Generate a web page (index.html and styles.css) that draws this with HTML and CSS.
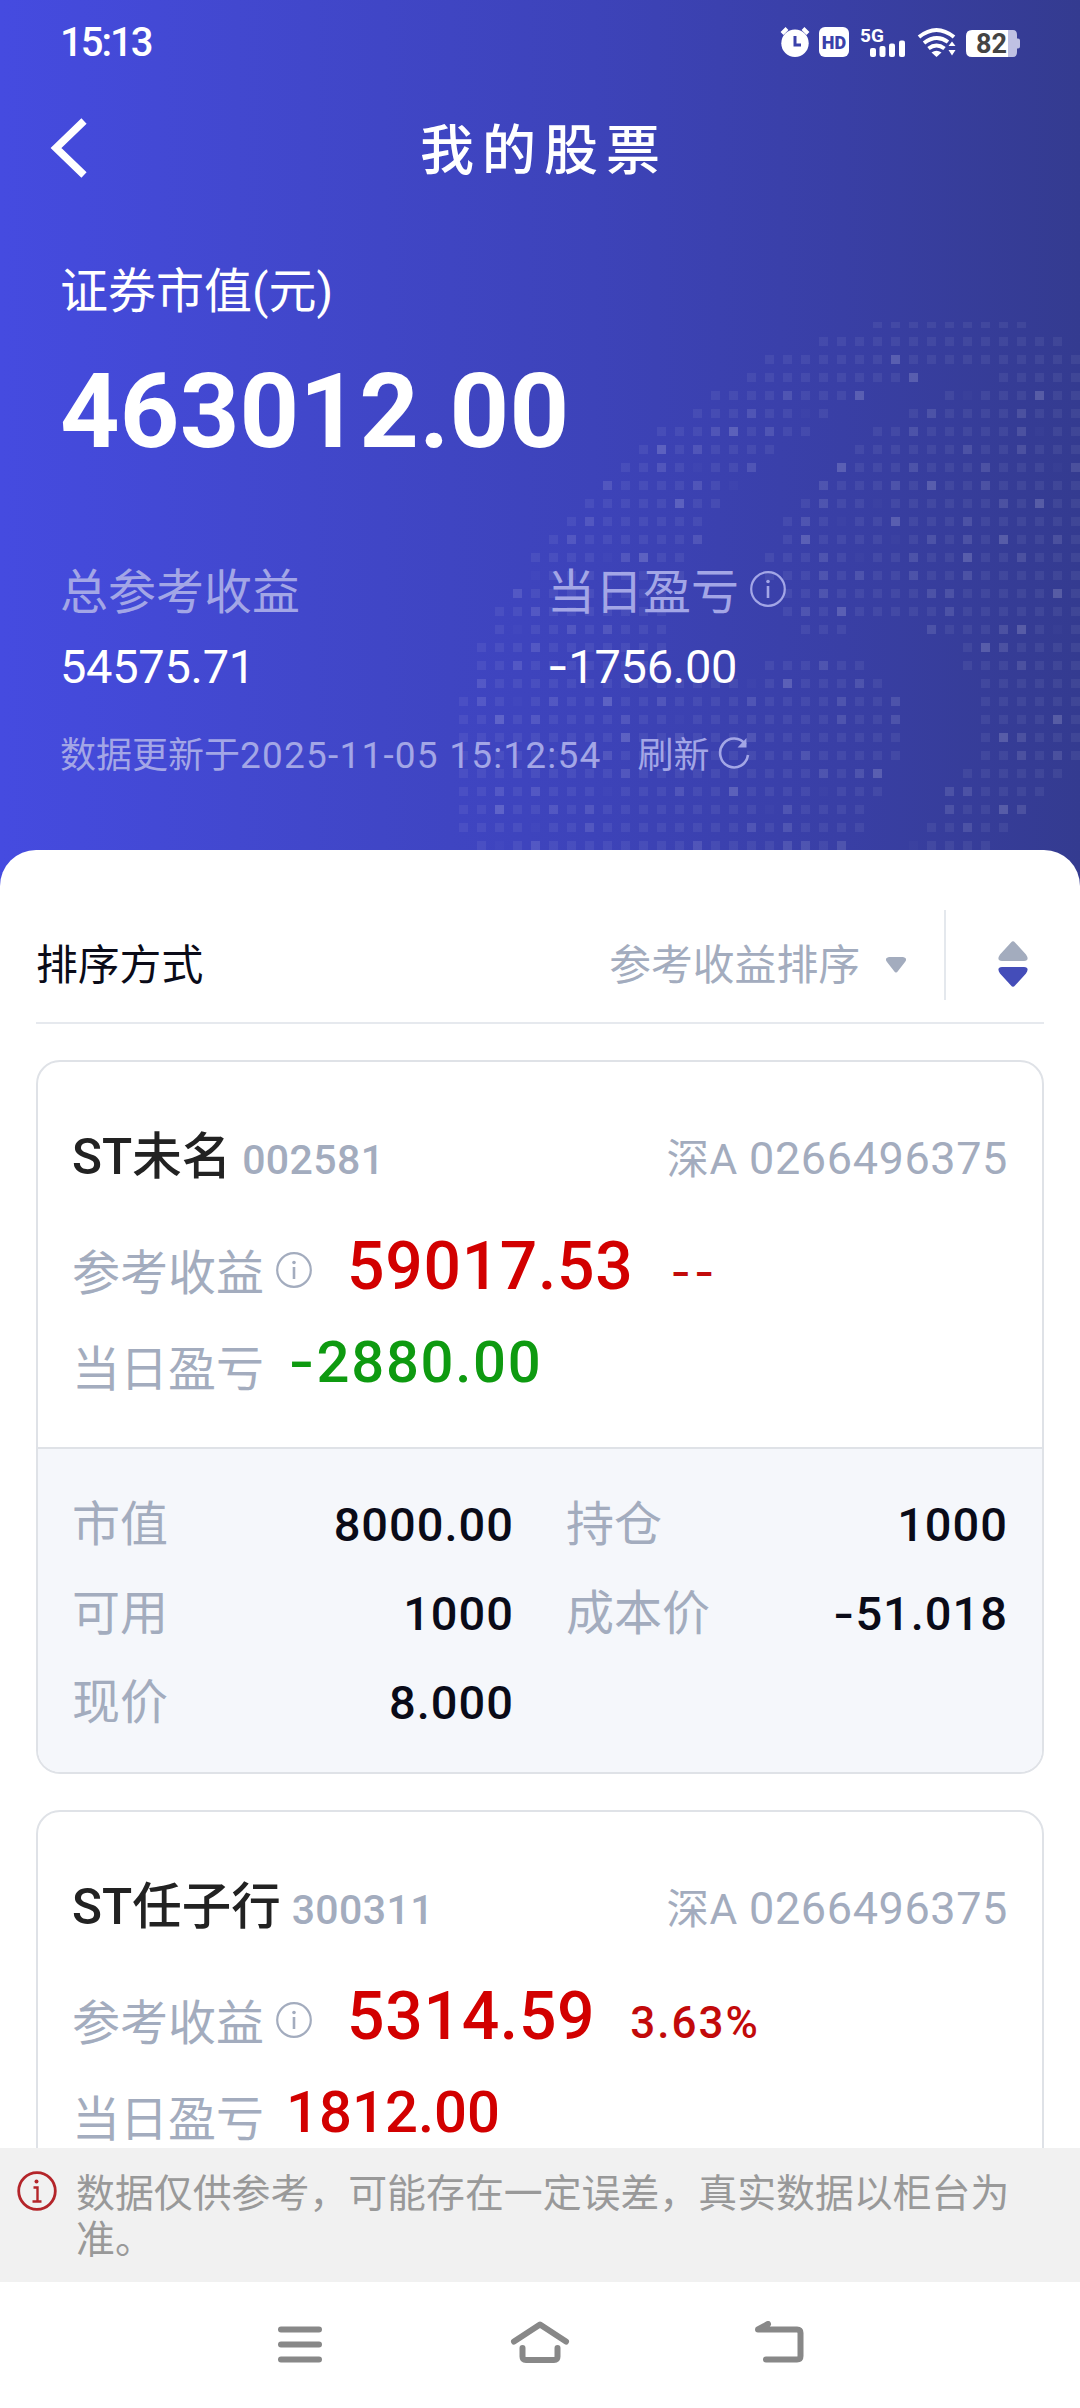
FILE: index.html
```html
<!DOCTYPE html>
<html lang="zh-CN">
<head>
<meta charset="utf-8">
<title>我的股票</title>
<link rel="stylesheet" href="styles.css">
</head>
<body>
<div class="screen">
  <main class="content">
    <section class="hero">
      <svg class="hero-dots" id="dots" width="640" height="564" viewBox="440 322 640 564"></svg>
      <div class="status">
        <span class="clock">15:13</span>
        <svg class="status-icons" width="244" height="36" viewBox="778 24 244 36">
          <g fill="#fff">
            <circle cx="795" cy="43.3" r="13.7"/>
            <path d="M782 33.5l5-5M808 33.5l-5-5" stroke="#fff" stroke-width="4" fill="none"/>
            <path d="M795 36v9h6" stroke="#3a41aa" stroke-width="3" fill="none"/>
            <rect x="819" y="27" width="30" height="30" rx="6"/>
            <text class="hd" x="834" y="49" text-anchor="middle">HD</text>
            <text class="net" x="860" y="42">5G</text>
            <rect x="870" y="48" width="6" height="9" rx="2"/>
            <rect x="879.5" y="46" width="6" height="11" rx="2"/>
            <rect x="889" y="43.500" width="6" height="13.500" rx="2"/>
            <rect x="899" y="40.500" width="6" height="16.500" rx="2"/>
            <path d="M936.500 57l-5-4.500q5-3.500 10 0z"/>
            <path d="M948.500 46l3.500-4.500 3.500 4.500zM948.500 50l3.500 5.500 3.500-5.500z"/>
          </g>
          <path d="M919 37q17.500-14 35 0M924 43q12.500-9.500 24 -1M928.500 48.500q8-6 16 0" fill="none" stroke="#fff" stroke-width="4"/>
          <path d="M1008 30h5q4 0 4 5v3.500h1q2 0 2 2v6q0 2-2 2h-1V52q0 5-4 5h-5z" fill="#bfc1e3"/>
          <path d="M972 30h36v27h-36q-6 0-6-6V36q0-6 6-6z" fill="#fff"/>
          <text class="battery" x="991.500" y="52.500" text-anchor="middle">82</text>
        </svg>
      </div>
      <header class="titlebar">
        <svg class="back" width="40" height="66" viewBox="0 0 40 66"><path d="M35 6L7 33l28 27" fill="none" stroke="#fff" stroke-width="7.500"/></svg>
        <h1>我的股票</h1>
      </header>
      <div class="total-label">证券市值(元)</div>
      <div class="total">463012.00</div>
      <div class="stats">
        <div>
          <div class="stat-label">总参考收益</div>
          <div class="stat-value">54575.71</div>
        </div>
        <div>
          <div class="stat-label">当日盈亏<svg class="info" viewBox="0 0 36 36"><use href="#i-info"/></svg></div>
          <div class="stat-value"><span class="minus">-</span>1756.00</div>
        </div>
      </div>
      <div class="updated"><span>数据更新于</span><span class="stamp">2025-11-05 15:12:54</span><span class="refresh">刷新</span>
        <svg width="34" height="34" viewBox="0 0 34 34"><path d="M28.500 7.500A14 14.500 0 1 0 31 18" fill="none" stroke="#a3a6e6" stroke-width="2.600"/><path d="M29.500 1v9.500h-9z" fill="#a3a6e6"/></svg>
      </div>
    </section>

    <section class="sheet">
      <div class="sort">
        <span class="sort-title">排序方式</span>
        <span class="sort-by">参考收益排序</span>
        <svg class="caret" width="20" height="16" viewBox="0 0 20 16"><path d="M3 0h14q5 1 2 5l-7 9q-2 3-4 0L1 5Q-2 1 3 0z" fill="#a3acbe"/></svg>
        <i class="rule"></i>
        <svg class="order" width="30" height="46" viewBox="0 0 30 46"><path d="M13 1.500q2-2.500 4 0l11 12q4 6-2 6.500H4q-6-.5-2-6.500z" fill="#a3acbe"/><path d="M13 44.500q2 2.500 4 0l11-12q4-6-2-6.500H4q-6 .5-2 6.500z" fill="#444db9"/></svg>
      </div>

      <article class="card">
        <div class="summary">
          <div class="head"><span class="name">ST未名</span><span class="code">002581</span><span class="account">深A <b>0266496375</b></span></div>
          <div class="profit up"><span class="label">参考收益</span><svg class="info" viewBox="0 0 36 36"><use href="#i-info"/></svg><span class="amount">59017.53</span><span class="rate none">--</span></div>
          <div class="daily down"><span class="label">当日盈亏</span><span class="amount"><span class="minus">-</span>2880.00</span></div>
        </div>
        <dl class="detail">
          <div><dt>市值</dt><dd>8000.00</dd></div>
          <div><dt>持仓</dt><dd>1000</dd></div>
          <div><dt>可用</dt><dd>1000</dd></div>
          <div><dt>成本价</dt><dd><span class="minus">-</span>51.018</dd></div>
          <div><dt>现价</dt><dd>8.000</dd></div>
        </dl>
      </article>

      <article class="card">
        <div class="summary">
          <div class="head"><span class="name">ST任子行</span><span class="code">300311</span><span class="account">深A <b>0266496375</b></span></div>
          <div class="profit up"><span class="label">参考收益</span><svg class="info" viewBox="0 0 36 36"><use href="#i-info"/></svg><span class="amount">5314.59</span><span class="rate">3.63%</span></div>
          <div class="daily up"><span class="label">当日盈亏</span><span class="amount">1812.00</span></div>
        </div>
      </article>
    </section>
  </main>

  <aside class="notice">
    <svg width="40" height="40" viewBox="0 0 40 40"><circle cx="20" cy="20" r="18.300" fill="none" stroke="#b4252a" stroke-width="2.800"/><circle cx="19.500" cy="10.500" r="2" fill="#b4252a"/><path d="M16.500 16.500h4v13M15.500 30.500h9" fill="none" stroke="#b4252a" stroke-width="2.400"/></svg>
    <p>数据仅供参考，可能存在一定误差，真实数据以柜台为准。</p>
  </aside>

  <nav class="nav">
    <svg width="48" height="48" viewBox="0 0 48 48"><path d="M5 8.500h38M5 23.500h38M5 38.500h38"/></svg>
    <svg width="60" height="48" viewBox="0 0 60 48"><path d="M4 20.500L30 3.500l26 17M12.500 27v8.500q0 3.500 3.500 3.500h28q3.500 0 3.500-3.500V27"/></svg>
    <svg width="50" height="48" viewBox="0 0 50 48"><path d="M11 38.500h31q3.500 0 3.500-3.500V12q0-3.500-3.500-3.500H3L13 3"/></svg>
  </nav>
</div>

<svg width="0" height="0" class="defs">
  <symbol id="i-info" viewBox="0 0 36 36"><circle cx="18" cy="18" r="16.800" fill="none" stroke="currentColor" stroke-width="2.200"/><circle cx="18" cy="10.500" r="1.800" fill="currentColor"/><path d="M18 15v12" stroke="currentColor" stroke-width="2.600"/></symbol>
</svg>
<script src="dots.js"></script>
</body>
</html>
```
FILE: styles.css
```css
* { box-sizing: border-box; }
body {
  margin: 0;
  background: #fff;
  font-family: Roboto, "Noto Sans CJK SC", sans-serif;
}
.defs { position: absolute; }
.screen {
  display: flex;
  flex-direction: column;
  width: 1080px;
  height: 2408px;
  overflow: hidden;
}
.content { flex: 1; min-height: 0; overflow: hidden; }

.hero {
  position: relative;
  height: 886px;
  padding: 0 60px;
  color: #fff;
  background: linear-gradient(90deg, #454be0 0%, #4248cf 22%, #3d43b9 55%, #393fa5 78%, #343b90 100%);
}
.hero > * { position: relative; }
.hero > .hero-dots { position: absolute; right: 0; bottom: 0; }

.status { display: flex; justify-content: space-between; align-items: center; height: 84px; }
.clock { font-size: 40px; font-weight: 500; letter-spacing: -2px; }
.status-icons { margin-right: -2px; }
.hd { font-size: 18px; font-weight: 900; fill: #3a41aa; }
.net { font-size: 19px; font-weight: 700; }
.battery { font-size: 27px; font-weight: 700; fill: #444; }

.titlebar { display: flex; align-items: center; justify-content: center; height: 134px; }
.back { position: absolute; left: -11px; top: 31px; }
.titlebar h1 { margin: 0; padding: 2px 0 0 8px; font-size: 54px; font-weight: 500; line-height: 60px; letter-spacing: 8px; }

.total-label { margin-top: 44px; font-size: 48px; line-height: 60px; }
.total { margin-top: 35px; font-size: 104px; font-weight: 700; line-height: 110px; letter-spacing: .2px; }
.stats { display: grid; grid-template-columns: 487px 1fr; margin-top: 96px; }
.stat-label { display: flex; align-items: center; height: 60px; font-size: 48px; line-height: 60px; color: #a3a6e6; }
.stat-value { height: 60px; margin-top: 14px; font-size: 47px; line-height: 60px; letter-spacing: -.3px; }
.info { width: 36px; height: 36px; margin-left: 11px; }
.stat-label .info { margin-bottom: 8px; }
.minus { font-family: Inter, sans-serif; line-height: 0; }
.updated { display: flex; align-items: baseline; height: 50px; margin-top: 34px; font-size: 36px; line-height: 50px; color: #a3a6e6; }
.stamp { font-size: 37px; letter-spacing: 1.2px; }
.refresh { margin-left: 36px; }
.updated svg { align-self: center; margin-left: 7px; margin-bottom: 4px; }

.sheet {
  position: relative;
  margin-top: -36px;
  padding: 60px 36px 0;
  border-radius: 36px 36px 0 0;
  background: #fff;
}
.sort {
  display: flex;
  align-items: center;
  height: 114px;
  border-bottom: 2px solid #e6e9ee;
  font-size: 41.800px;
  line-height: 60px;
  color: #a3acbe;
}
.sort-title { flex: 1; color: #0a0b18; }
.caret { margin: 0 38px 2px 26px; }
.rule { align-self: flex-start; width: 2px; height: 90px; background: #e4e8ed; }
.order { margin: 0 16px 5px 52px; }

.card {
  height: 714px;
  margin-top: 36px;
  border: 2px solid #dfe2e7;
  border-radius: 24px;
  overflow: hidden;
}
.summary { height: 385px; padding: 65px 34px 0; }
.head { display: flex; align-items: baseline; height: 60px; line-height: 60px; color: #a3acbe; }
.name { font-size: 49.500px; font-weight: 500; color: #222; }
.code { margin-left: 11px; font-size: 41px; font-weight: 500; letter-spacing: .4px; }
.account { margin-left: auto; font-size: 42.500px; letter-spacing: .6px; }
.account b { font-size: 45px; font-weight: 400; }
.profit, .daily { display: flex; align-items: flex-start; }
.profit { height: 70px; margin-top: 45px; }
.daily { height: 60px; margin-top: 30px; }
.label { font-size: 48px; line-height: 84px; color: #a3acbe; }
.daily .label { line-height: 76px; }
.summary .info { margin: 20px 0 0 12px; color: #a3acbe; }
.profit .amount { margin-left: 35px; font-size: 66px; font-weight: 500; line-height: 70px; letter-spacing: .7px; }
.daily .amount { margin-left: 22px; font-size: 58px; font-weight: 500; line-height: 60px; }
.rate { margin-left: 35px; font-size: 44px; font-weight: 500; line-height: 82px; letter-spacing: 2px; }
.rate.none { margin-left: 37px; font-family: Inter, sans-serif; line-height: 80px; letter-spacing: 3px; }
.up { color: #d20000; }
.up .rate { color: #c20a0a; }
.down { color: #0e9a10; }
.down .amount { margin-left: 24px; letter-spacing: 1.700px; }

.detail {
  display: grid;
  grid-template-columns: 1fr 1fr;
  grid-auto-rows: 89.3px;
  column-gap: 52px;
  height: 325px;
  margin: 0;
  padding: 31px 34px 0;
  border-top: 2px solid #dfe2e7;
  background: #f5f7fb;
}
.detail div { display: flex; justify-content: space-between; align-items: center; line-height: 60px; }
.detail dt { font-size: 48px; color: #a3acbe; }
.detail dd { height: 60px; margin: 0; font-size: 47px; font-weight: 500; letter-spacing: 1px; color: #0a0b18; }

.notice {
  display: flex;
  flex: none;
  height: 134px;
  padding: 23px 60px 0 17px;
  background: #f1f1f1;
}
.notice p { flex: 1; margin: 0 0 0 19px; font-size: 38.900px; line-height: 46px; color: #999; }

.nav { display: flex; flex: none; justify-content: space-between; height: 126px; padding: 39px 275px 0 276px; }
.nav svg { fill: none; stroke: #888; stroke-width: 6; stroke-linecap: round; stroke-linejoin: round; }
```
FILE: dots.js
```js
// Each row: filled column spans, then the columns that are faint, medium and bright.
const rows = [
  [[[23, 31]], [], [], []],
  [[[20, 33]], [], [], []],
  [[[17, 34]], [], [], [24]],
  [[[16, 25], [30, 34]], [], [], [25]],
  [[[14, 22], [27, 34]], [28], [18], [22, 32]],
  [[[13, 20], [25, 34]], [19], [16, 26, 31], []],
  [[[11, 19], [23, 34]], [32], [14, 17, 25, 31], [15]],
  [[[10, 17], [22, 34]], [], [13, 28, 31], [11]],
  [[[9, 16], [21, 34]], [13, 33], [11, 16, 25, 29, 34], [21]],
  [[[8, 15], [20, 34]], [15], [8, 13, 20, 24, 29], [26]],
  [[[7, 14], [19, 34]], [23], [20, 30], [12, 32]],
  [[[6, 13], [18, 34]], [21], [7, 19, 28], [24]],
  [[[5, 13], [18, 34]], [24], [6, 13, 26, 28, 33], [19, 30]],
  [[[4, 12], [17, 34]], [8, 22], [9, 20, 25, 31], [10, 28]],
  [[[4, 12], [17, 34]], [4], [20, 22, 25, 28], []],
  [[[3, 11], [18, 34]], [], [3, 20, 26, 27], [33]],
  [[[2, 11], [18, 34]], [], [4, 19, 27], [21]],
  [[[2, 11], [19, 21], [26, 34]], [3, 33], [6, 8, 26, 30], [31]],
  [[[1, 11], [28, 34]], [], [4, 30], [29]],
  [[[1, 11], [17, 22], [28, 34]], [], [3, 20, 31], []],
  [[[1, 23], [29, 34]], [16], [1, 22], [18]],
  [[[0, 24], [29, 34]], [3], [1, 5, 11, 16, 21, 24], [8]],
  [[[0, 24], [29, 34]], [12], [4, 9, 21, 24], [2, 33]],
  [[[0, 24], [29, 34]], [], [12, 16, 31], [9, 30]],
  [[[0, 24], [29, 34]], [], [8, 19, 31, 33], []],
  [[[0, 23], [28, 33]], [], [9, 20, 22], [23]],
  [[[0, 23], [27, 32]], [8, 20], [2, 4, 12, 27, 28], [15]],
  [[[0, 22], [27, 31]], [17], [5, 7, 18, 27, 31], [2, 30]],
  [[[0, 22], [26, 30]], [4], [7, 16, 18, 28], []],
  [[[1, 21], [25, 29]], [2, 25], [4, 13, 18, 19, 21], []]
];
let out = '';
rows.forEach(([spans, faint, medium, bright], r) => {
  for (const [from, to] of spans) {
    for (let c = from; c <= to; c++) {
      const a = bright.includes(c) ? 0.17 : medium.includes(c) ? 0.11 : faint.includes(c) ? 0.02 : 0.06;
      out += `<rect x="${459 + 18 * c}" y="${319 + 18 * r}" width="9" height="9" fill="#fff" fill-opacity="${a}"/>`;
    }
  }
});
document.getElementById('dots').innerHTML = out;
```
